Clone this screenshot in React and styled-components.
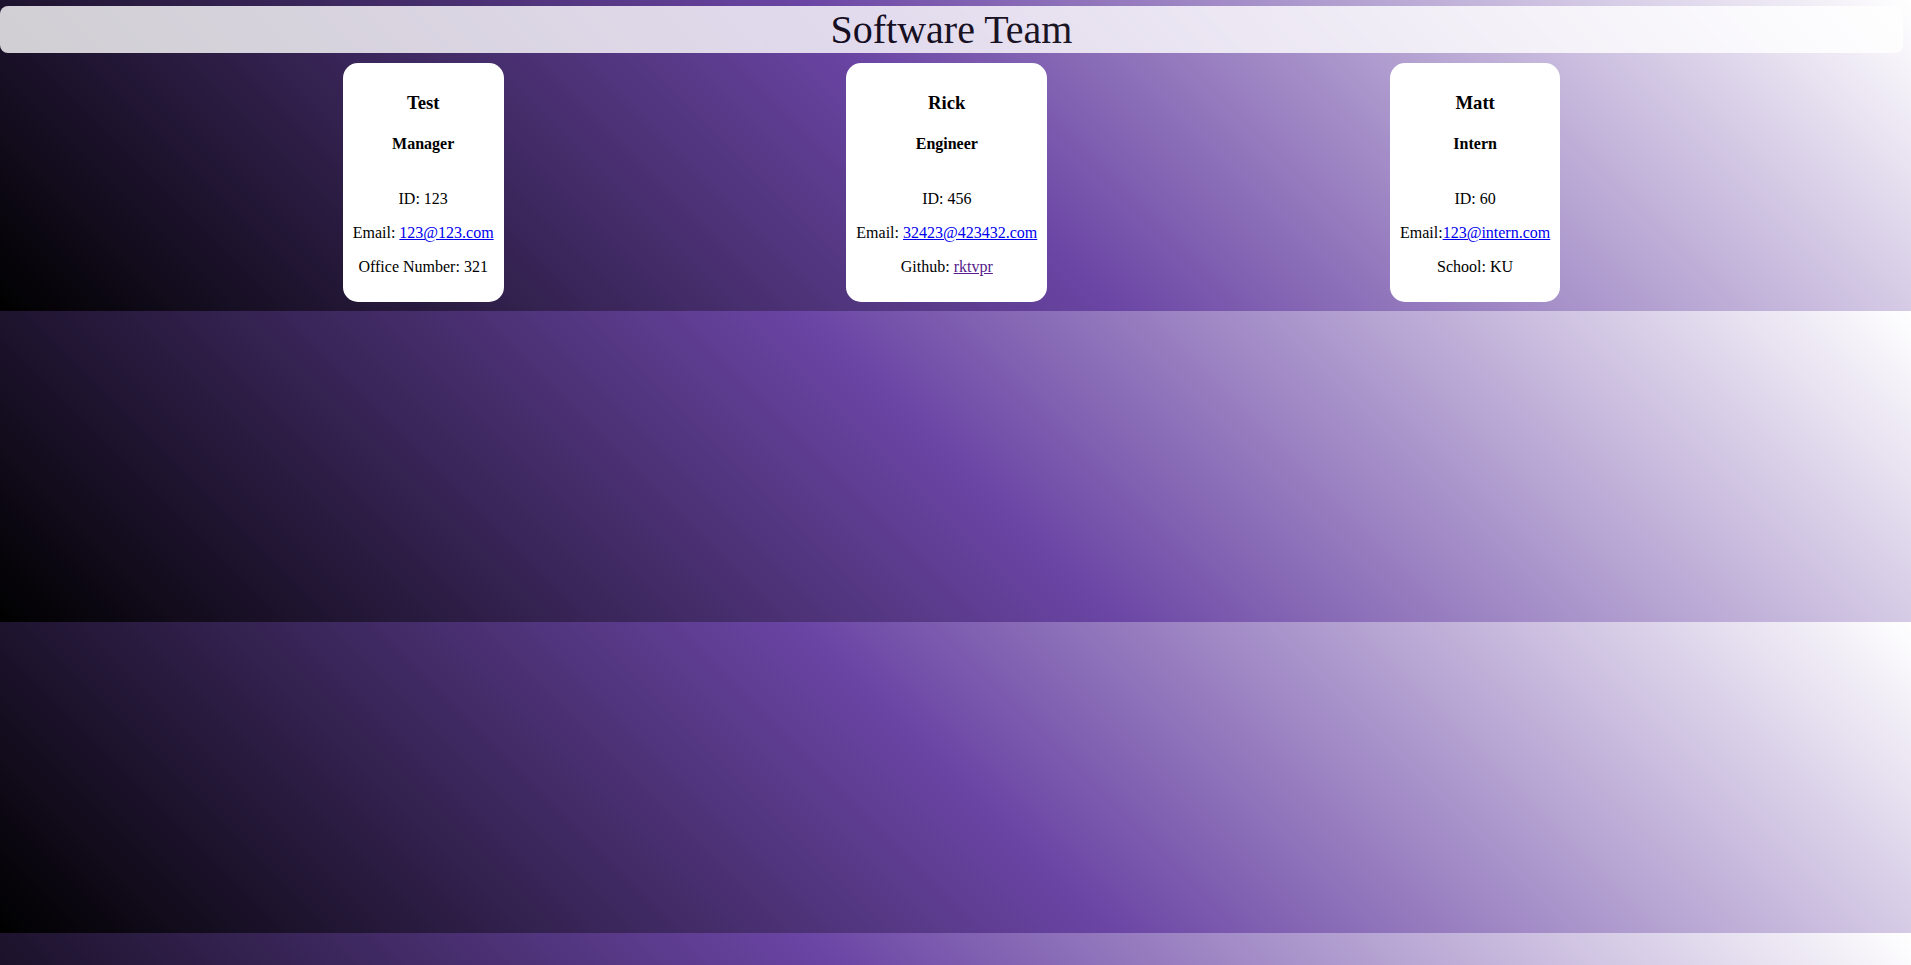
import React from "react";
import styled, { createGlobalStyle } from "styled-components";

const GlobalStyle = createGlobalStyle`
  body {
    margin: 0;
    font-family: "Liberation Serif", "Times New Roman", serif;
    background: linear-gradient(45deg, #000000 0%, #6a45a4 50%, #ffffff 100%);
  }
`;

const Page = styled.div`
  padding: 6px 8px 9px 0;
`;

const Header = styled.h1`
  margin: 0;
  font-size: 40px;
  line-height: 47px;
  font-weight: normal;
  text-align: center;
  color: #000;
  background: #fff;
  opacity: 0.8;
  border-radius: 8px;
`;

const Team = styled.div`
  display: flex;
  justify-content: space-evenly;
  align-items: flex-start;
  margin-top: 10px;
`;

const Card = styled.div`
  background: #fff;
  border-radius: 15px;
  padding: 10px;
  text-align: center;
  color: #000;
`;

const CardHeader = styled.div``;

const Name = styled.h3`
  font-size: 18.72px;
  font-weight: bold;
  margin: 18.72px 0;
`;

const Role = styled.h4`
  font-size: 16px;
  font-weight: bold;
  margin: 21.28px 0;
`;

const CardBody = styled.div`
  display: flow-root;
`;

const Info = styled.p`
  margin: 16px 0;
  font-size: 16px;
  white-space: nowrap;
`;

const Link = styled.a`
  color: ${(p) => (p.$visited ? "#551a8b" : "#0000ee")};
  text-decoration: underline;
`;

const members = [
  {
    name: "Test",
    role: "Manager",
    id: "123",
    email: "123@123.com",
    sep: " ",
    extra: { label: "Office Number: ", value: "321" },
  },
  {
    name: "Rick",
    role: "Engineer",
    id: "456",
    email: "32423@423432.com",
    sep: " ",
    extra: { label: "Github: ", value: "rktvpr", link: true },
  },
  {
    name: "Matt",
    role: "Intern",
    id: "60",
    email: "123@intern.com",
    sep: "",
    extra: { label: "School: ", value: "KU" },
  },
];

export default function App() {
  return (
    <>
      <GlobalStyle />
      <Page>
        <Header>Software Team</Header>
        <Team>
          {members.map((m) => (
            <Card key={m.name}>
              <CardHeader>
                <Name>{m.name}</Name>
                <Role>{m.role}</Role>
              </CardHeader>
              <CardBody>
                <Info>ID: {m.id}</Info>
                <Info>
                  Email:{m.sep}
                  <Link href="#">{m.email}</Link>
                </Info>
                <Info>
                  {m.extra.label}
                  {m.extra.link ? (
                    <Link href="#" $visited>
                      {m.extra.value}
                    </Link>
                  ) : (
                    m.extra.value
                  )}
                </Info>
              </CardBody>
            </Card>
          ))}
        </Team>
      </Page>
    </>
  );
}
